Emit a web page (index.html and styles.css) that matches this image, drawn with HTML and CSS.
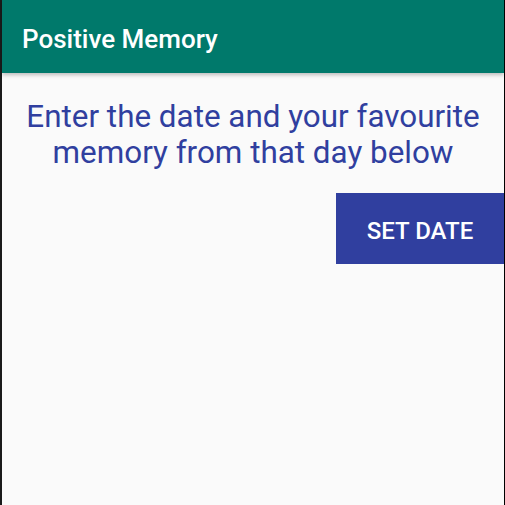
FILE: index.html
```html
<!DOCTYPE html>
<html>
<head>
<meta charset="utf-8">
<link rel="stylesheet" href="styles.css">
</head>
<body>
<div class="screen">
  <header class="toolbar">
    <span class="title">Positive Memory</span>
  </header>
  <main class="content">
    <p class="prompt">Enter the date and your favourite<br>memory from that day below</p>
    <div class="actions">
      <button class="set-date">SET DATE</button>
    </div>
  </main>
</div>
</body>
</html>
```
FILE: styles.css
```css
html, body {
  margin: 0;
  padding: 0;
  width: 505px;
  height: 505px;
  overflow: hidden;
  background: #fafafa;
}
.screen {
  width: 505px;
  height: 505px;
  box-sizing: border-box;
  border-left: 2px solid #1a1a1a;
  border-right: 1px solid #000;
  background: #fafafa;
  font-family: Roboto, "Liberation Sans", sans-serif;
}
.toolbar {
  height: 73px;
  background: #00796b;
  display: flex;
  align-items: center;
  padding-left: 20px;
  box-shadow: 0 2px 4px rgba(0,0,0,0.25);
  position: relative;
}
.title {
  color: #fff;
  font-size: 26px;
  font-weight: 500;
  padding-top: 4px;
}
.content {
  display: flex;
  flex-direction: column;
}
.prompt {
  margin: 26px 0 0;
  text-align: center;
  color: #303f9f;
  font-size: 31.4px;
  line-height: 36px;
}
.actions {
  display: flex;
  justify-content: flex-end;
  margin-top: 22px;
}
.set-date {
  width: 168px;
  height: 71px;
  border: none;
  background: #303f9f;
  color: #fff;
  font-family: Roboto, "Liberation Sans", sans-serif;
  font-size: 24px;
  font-weight: 500;
  padding: 5px 0 0;
}
```
